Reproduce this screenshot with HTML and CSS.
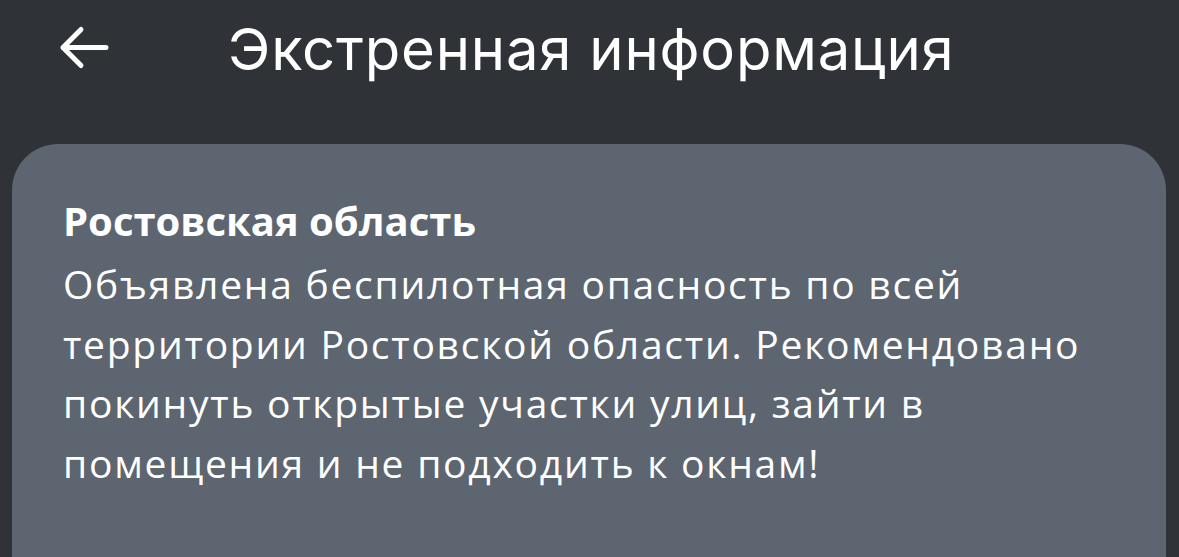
FILE: index.html
```html
<!DOCTYPE html>
<html lang="ru">
<head>
<meta charset="utf-8">
<link rel="stylesheet" href="styles.css">
</head>
<body>
<header class="topbar">
  <svg class="back" width="50" height="50" viewBox="0 0 50 50" aria-hidden="true">
    <path d="M47 24.5 H4 M22 6.5 L4 24.5 L22 42.5" fill="none" stroke="#ffffff" stroke-width="5" stroke-linecap="round" stroke-linejoin="round"/>
  </svg>
  <h1 class="title">Экстренная информация</h1>
</header>
<main class="card">
  <h2 class="card-title">Ростовская область</h2>
  <p class="card-text">Объявлена беспилотная опасность по всей<br>территории Ростовской области. Рекомендовано<br>покинуть открытые участки улиц, зайти в<br>помещения и не подходить к окнам!</p>
</main>
</body>
</html>
```
FILE: styles.css
```css
html, body {
  margin: 0;
  padding: 0;
}
body {
  background: #2f3237;
  width: 1179px;
  height: 557px;
  overflow: hidden;
  font-family: "Open Sans", "Noto Sans", sans-serif;
  color: #ffffff;
}
.topbar {
  display: flex;
  align-items: center;
  height: 96px;
  padding-left: 59px;
}
.back {
  display: block;
  flex: none;
}
.title {
  margin: 2px 0 0 119px;
  font-family: Inter, Roboto, sans-serif;
  font-weight: 400;
  font-size: 58px;
  letter-spacing: 0.8px;
  line-height: 1;
  color: #ffffff;
}
.card {
  margin: 48px 13px 0 12px;
  background: #5c6570;
  border-radius: 46px 46px 0 0;
  height: 420px;
  padding: 52px 51px 0 51px;
  box-sizing: border-box;
}
.card-title {
  margin: 0;
  font-weight: 700;
  font-size: 40px;
  line-height: 50px;
  letter-spacing: 0;
}
.card-text {
  margin: 8px 0 0 0;
  font-weight: 380;
  font-size: 39px;
  line-height: 59.5px;
  letter-spacing: 1.75px;
}
```
